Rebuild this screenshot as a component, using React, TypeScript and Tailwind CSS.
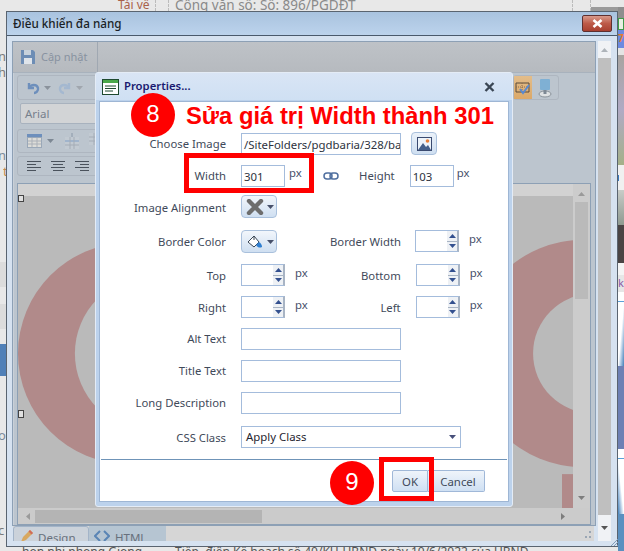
import React from "react";

const Arrow = ({ up = false, c = "#33508f" }: { up?: boolean; c?: string }) => (
  <svg width="7" height="4" viewBox="0 0 7 4"><path d={up ? "M3.5 0L7 4H0Z" : "M0 0H7L3.5 4Z"} fill={c} /></svg>
);

const Spin = () => (
  <div className="w-[44px] h-[22px] border border-[#a4bcdc] border-r-[2px] border-r-[#a8b4c4] bg-white flex justify-end">
    <div className="w-[10px] h-full flex flex-col gap-[1px] bg-[#a8b4c4]">
      <div className="flex-1 bg-[#eef1f5] flex items-center justify-center"><Arrow up /></div>
      <div className="flex-1 bg-[#eef1f5] flex items-center justify-center"><Arrow /></div>
    </div>
  </div>
);

const Label = ({ children, w = "w-[126px]", lh = "leading-[21px]" }: { children: React.ReactNode; w?: string; lh?: string }) => (
  <div className={`${w} ${lh} text-right text-[#3f4a5a] text-[11.3px] shrink-0 whitespace-nowrap`}>{children}</div>
);

const Px = ({ className = "" }: { className?: string }) => (
  <span className={`text-[11.3px] leading-[18px] text-[#47506a] ${className}`}>px</span>
);

const Input = ({ w, v = "" }: { w: string; v?: string }) => (
  <div className={`${w} h-[22px] border border-[#a4bcdc] bg-white text-[11.4px] leading-[22px] px-[2px] text-[#2d3340] overflow-hidden whitespace-nowrap`}>{v}</div>
);

const DropBtn = ({ children }: { children: React.ReactNode }) => (
  <div className="w-[36px] h-[23px] rounded-[4px] border border-[#a9c0dc] bg-gradient-to-b from-[#f2f6fb] to-[#cfdff1] flex items-center pl-[4px] gap-[3px]">
    <div className="w-[18px] h-[18px] flex items-center justify-center">{children}</div>
    <Arrow c="#47506a" />
  </div>
);

export default function App() {
  return (
    <div className="relative w-[624px] h-[551px] overflow-hidden bg-[#e8e8e8]" style={{ fontFamily: '"Noto Sans", sans-serif' }}>
      {/* page behind */}
      <div className="absolute left-[118px] top-[-3px] text-[12px] leading-[16px] text-[#a8614a]">Tải về</div>
      <div className="absolute left-[175px] top-[-4px] text-[13.5px] leading-[18px] text-[#8a8a8a] whitespace-nowrap">Công văn số: Số: 896/PGDĐT</div>
      <div className="absolute left-[155px] top-0 h-[11px] border-l border-dashed border-[#bbbbbb]" />
      <div className="absolute left-[168px] top-0 h-[11px] border-l border-dashed border-[#bbbbbb]" />
      <div className="absolute left-[572px] top-0 h-[11px] border-l border-dashed border-[#bbbbbb]" />
      <div className="absolute left-[590px] top-0 h-[11px] border-l border-dashed border-[#bbbbbb]" />
      <div className="absolute left-[591px] top-[7px] w-[33px] h-[5px] bg-[#9a9a9a]" />

      {/* right strip of the page */}
      <div className="absolute left-[618px] top-[7px] w-[6px] h-[544px] flex flex-col overflow-hidden">
        <div className="h-[11px] bg-[#8e8e8e] shrink-0" />
        <div className="h-[12px] bg-[#e8f0e4] border border-[#3f9a4a] shrink-0" />
        <div className="h-[18px] bg-[#6d8ae0] shrink-0 text-[10px] leading-[16px] font-bold text-[#e87a2a] overflow-hidden">7</div>
        <div className="h-[7px] bg-[#e4e4e4] shrink-0" />
        <div className="h-[110px] bg-gradient-to-b from-[#a8a4a0] via-[#b0aac4] to-[#a4b088] shrink-0" />
        <div className="h-[25px] bg-[#f0f0f0] shrink-0 flex items-center"><div className="w-[1px] h-[6px] bg-[#3a7ac0]" /></div>
        <div className="h-[35px] bg-gradient-to-b from-[#c8ccc8] to-[#8f9a90] shrink-0" />
        <div className="h-[38px] bg-[#4a4444] shrink-0" />
        <div className="h-[12px] bg-[#f4f4f4] shrink-0" />
        <div className="h-[17px] bg-[#e6e6e6] text-[11px] leading-[15px] text-[#8a5aa8] shrink-0">k</div>
        <div className="h-[10px] bg-white border-b border-[#5aa0d8] shrink-0" />
        <div className="h-[64px] bg-gradient-to-br from-white via-white to-[#3f7fb8] shrink-0" />
        <div className="h-[83px] bg-[#6d80b4] shrink-0" />
        <div className="h-[10px] bg-white border-b border-[#5aa0d8] shrink-0" />
        <div className="h-[55px] bg-gradient-to-tr from-[#3f7fb8] via-white to-white shrink-0" />
        <div className="flex-1 bg-[#5a90c0]" />
      </div>

      {/* left strip of the page */}
      <div className="absolute left-0 top-[262px] w-[6px] h-[25px] bg-[#dcdcdc]" />
      <div className="absolute left-0 top-[304px] w-[6px] h-[25px] bg-[#dcdcdc]" />
      <div className="absolute left-0 top-[344px] w-[6px] h-[32px] bg-[#5080b8]" />
      <div className="absolute left-[-2px] top-[48px] w-[8px] overflow-hidden text-[13px] leading-[17px] text-[#7a7a7a]">n</div>
      <div className="absolute left-[-2px] top-[64px] w-[8px] overflow-hidden text-[13px] leading-[17px] text-[#7a7a7a]">h</div>
      <div className="absolute left-[-2px] top-[147px] w-[8px] overflow-hidden text-[13px] leading-[17px] text-[#7a8a9a]">n</div>
      <div className="absolute left-[3px] top-[163px] w-[3px] overflow-hidden text-[13px] leading-[17px] text-[#c08a50]">t</div>
      <div className="absolute left-[-2px] top-[427px] w-[8px] overflow-hidden text-[13px] leading-[17px] text-[#7a8a9a]">o</div>
      <div className="absolute left-[-2px] top-[522px] w-[8px] overflow-hidden text-[13px] leading-[17px] text-[#7a7a7a]">c</div>

      <div className="absolute left-[22px] top-[545px] text-[12px] leading-[14px] text-[#555] whitespace-nowrap">hon nhi phong Giong</div>
      <div className="absolute left-[175px] top-[545px] text-[12px] leading-[14px] text-[#555] whitespace-nowrap">Tiếp, điện Kế hoạch số 40/KH-UBND ngày 10/6/2022 của UBND...</div>

      {/* outer window */}
      <div className="absolute left-[6px] top-[11px] w-[612px] h-[536px] border border-[#5a6470] bg-[#d6e2f0] flex flex-col overflow-hidden">
        <div className="h-[24px] shrink-0 bg-gradient-to-b from-[#a9c3df] to-[#bcd3ec] border-b border-[#4a5a6c] flex items-center justify-between pl-[6px] pr-[5px]">
          <span className="text-[11.7px] font-medium text-[#1b1f26]">Điều khiển đa năng</span>
          <div className="w-[30px] h-[17px] rounded-[2px] border border-[#5f3030] bg-gradient-to-b from-[#d89a8c] via-[#bd5a48] to-[#a84030] flex items-center justify-center">
            <svg width="11" height="9" viewBox="0 0 11 9"><path d="M1.5 1L9.5 8M9.5 1L1.5 8" stroke="#fff" strokeWidth="2.6" /></svg>
          </div>
        </div>
        <div className="flex flex-1 min-h-0 pl-[5px] pt-[5px]">
          {/* inner panel */}
          <div className="w-[584px] flex flex-col">
            <div className="h-[485px] border border-[#8da0b5] flex flex-col bg-[#bcc5ce] shrink-0">
              <div className="h-[31px] shrink-0 bg-gradient-to-b from-[#bec2c7] to-[#b6babf] flex items-center border-b border-[#a8b2bd]">
                <div className="w-[85px] h-full border-r border-[#a0a8b2] flex items-center pl-[7px] gap-[5px]">
                  <svg width="16" height="16" viewBox="0 0 16 16"><path d="M1 1H13L15 3V15H1Z" fill="#6d8db5" /><rect x="4" y="1" width="7" height="5" fill="#c8d2dc" /><rect x="4" y="9" width="8" height="6" fill="#dfe4ea" /></svg>
                  <span className="text-[11px] text-[#8892a0]">Cập nhật</span>
                </div>
              </div>
              <div className="flex-1 min-h-0 flex flex-col px-[3px] pt-[2px] border-l border-[#c9d0d8]">
                {/* toolbars */}
                <div className="h-[108px] shrink-0 flex justify-between">
                  <div className="w-[90px] flex flex-col">
                    <div className="h-[25px] rounded-[3px] border border-[#aeb6c0] flex items-center pl-[8px] gap-[4px]">
                      <svg width="14" height="14" viewBox="0 0 14 14" fill="none" stroke="#6d8fbc" strokeWidth="2.4"><path d="M3 2V7H8" /><path d="M3 7C5 3 11 3 12 7C12.5 10 10 12 8 12" /></svg>
                      <Arrow c="#8a929c" />
                      <svg width="14" height="14" viewBox="0 0 14 14" fill="none" stroke="#a4b8d0" strokeWidth="2.4" className="ml-[3px]"><path d="M11 2V7H6" /><path d="M11 7C9 3 3 3 2 7C1.5 10 4 12 6 12" /></svg>
                      <Arrow c="#a0a6ae" />
                    </div>
                    <div className="h-[21px] mt-[3px] rounded-[2px] border border-[#a8b2be] bg-[#d2d4d6] text-[11.5px] leading-[19px] pl-[4px] text-[#77808c] ml-[3px]">Arial</div>
                    <div className="h-[24px] mt-[5px] rounded-[3px] border border-[#aeb6c0] flex items-center pl-[9px] gap-[5px]">
                      <svg width="15" height="14" viewBox="0 0 15 14"><rect width="15" height="14" fill="#9aa8b8" /><rect y="0" width="15" height="3" fill="#6d8fbc" /><path d="M1 4H14V13H1Z" fill="#dcdcd8" /><path d="M5 4V13M10 4V13M1 7H14M1 10H14" stroke="#aab0b8" /></svg>
                      <Arrow c="#7d8894" />
                      <svg width="14" height="16" viewBox="0 0 14 16" className="ml-[6px]"><rect y="4" width="14" height="12" fill="#c2cad2" /><path d="M0 8H14" stroke="#a0b4cc" strokeWidth="2" /><path d="M5 4V16M9 4V16M0 12H14" stroke="#a4acb6" /><path d="M7 0V4" stroke="#8a98a8" /></svg>
                      <svg width="14" height="16" viewBox="0 0 14 16" className="ml-[5px]"><rect width="14" height="12" fill="#c2cad2" /><path d="M5 0V12M9 0V12M0 4H14M0 8H14" stroke="#a4acb6" /></svg>
                    </div>
                    <div className="h-[20px] mt-[3px] rounded-[3px] border border-[#aeb6c0] flex items-center pl-[9px] gap-[10px]">
                      {[0, 1, 2].map((i) => (
                        <svg key={i} width="14" height="11" viewBox="0 0 14 11" stroke="#4a525c">
                          <path d={i === 0 ? "M0 .5H14M0 3.5H9M0 6.5H14M0 9.5H9" : i === 1 ? "M0 .5H14M2 3.5H12M0 6.5H14M2 9.5H12" : "M0 .5H14M5 3.5H14M0 6.5H14M5 9.5H14"} />
                        </svg>
                      ))}
                    </div>
                  </div>
                  <div className="w-[46px] h-[25px] rounded-[3px] border border-[#aeb6c0] flex mr-[33px]">
                    <div className="w-[18px] h-full bg-gradient-to-b from-[#e3bd8a] to-[#dba868] flex items-center justify-center">
                      <svg width="16" height="14" viewBox="0 0 16 14" fill="none"><path d="M1 2H14V11H1Z" stroke="#5a4a3a" /><path d="M7 2V11M1 6H14" stroke="#8a6a4a" strokeDasharray="1 1" /><path d="M5 8L8 12L14 4" stroke="#5a8ad0" strokeWidth="2" /></svg>
                    </div>
                    <div className="flex-1 flex items-center justify-center">
                      <svg width="16" height="20" viewBox="0 0 16 20"><rect x="3" y="1" width="10" height="11" rx="1" fill="#7fb0d4" /><ellipse cx="8" cy="16" rx="6" ry="3" fill="#dfe2e4" stroke="#8a929a" /><rect x="6.5" y="12" width="3" height="4" fill="#7d8894" /></svg>
                    </div>
                  </div>
                </div>
                {/* canvas frame */}
                <div className="flex-1 min-h-0 border border-[#8da0b5] border-b-0 mr-[1px] flex flex-col bg-[#cfcfcf]">
                  <div className="flex-1 min-h-0 flex">
                    <div className="flex-1 min-w-0 relative flex flex-col">
                      <div className="h-[12px] shrink-0 bg-[#d2d2d2]" />
                      <svg className="flex-1 w-full min-h-0" viewBox="0 0 556 313" preserveAspectRatio="none">
                        <rect width="556" height="313" fill="#bababa" />
                        <circle cx="111" cy="158" r="111" fill="#b18a8a" />
                        <circle cx="135" cy="158" r="78" fill="#bababa" />
                        <circle cx="566" cy="158" r="114" fill="#b18a8a" />
                        <circle cx="576" cy="158" r="60" fill="#bababa" />
                        <rect x="545" y="279" width="11" height="34" fill="#b18a8a" />
                      </svg>
                      <div className="absolute left-0 top-[11px] w-[6px] h-[7px] border border-[#444] bg-[#e0e0e0]" />
                      <div className="absolute left-0 top-[226px] w-[6px] h-[8px] border border-[#444] bg-[#e0e0e0]" />
                    </div>
                    <div className="w-[17px] shrink-0 bg-[#cccccc] flex flex-col items-center pt-[8px]">
                      <Arrow up c="#9a9a9a" />
                      <div className="w-[13px] h-[97px] bg-[#bababa] mt-[6px]" />
                      <div className="flex-1" />
                      <div className="mb-[8px]"><Arrow c="#7d7d7d" /></div>
                    </div>
                  </div>
                  <div className="h-[17px] shrink-0 bg-[#cbcbcb] flex items-center pl-[8px] pr-[25px] border-b border-[#8da0b5]">
                    <svg width="4" height="7" viewBox="0 0 4 7"><path d="M4 0V7L0 3.5Z" fill="#9a9a9a" /></svg>
                    <div className="w-[227px] h-[13px] bg-[#b4b4b4] ml-[5px]" />
                    <div className="flex-1" />
                    <svg width="4" height="7" viewBox="0 0 4 7"><path d="M0 0V7L4 3.5Z" fill="#7d7d7d" /></svg>
                  </div>
                </div>
              </div>
            </div>
            {/* tabs */}
            <div className="h-[15px] bg-[#d6d6d6] flex overflow-hidden ml-[1px] mr-[2px]">
              <div className="w-[76px] h-[22px] rounded-t-[3px] border border-[#a3b4c8] bg-[#cbd2da] flex items-start pl-[6px] pt-[2px] gap-[4px]">
                <svg width="14" height="14" viewBox="0 0 14 14"><path d="M1 13L3 8L10 1L13 4L6 11Z" fill="#d8a860" /><path d="M10 1L13 4L11.5 5.5L8.5 2.5Z" fill="#d06a5a" /></svg>
                <span className="text-[11.5px] leading-[18px] text-[#68707c]">Design</span>
              </div>
              <div className="w-[77px] h-[22px] bg-[#b6c5d2] flex items-start pl-[5px] pt-[3px] gap-[5px]">
                <svg width="16" height="14" viewBox="0 0 16 14" fill="none" stroke="#5a85b5" strokeWidth="2"><path d="M6 2L1 7L6 12M10 2L15 7L10 12" /></svg>
                <span className="text-[11.5px] leading-[18px] text-[#68707c]">HTML</span>
              </div>
            </div>
          </div>
          {/* right scrollbar */}
          <div className="w-[13px] ml-[2px] flex flex-col items-center mt-[-5px] pt-[5px]">
            <div className="h-[17px] w-full bg-[#f0f2f5] flex items-center justify-center"><Arrow up c="#aeb4ba" /></div>
            <div className="h-[457px] w-full bg-[#bfbfbf]" />
            <div className="h-[26px] w-full bg-[#f0f2f5] flex items-center justify-center"><Arrow c="#555" /></div>
          </div>
        </div>
      </div>

      {/* resize grips */}
      <svg className="absolute left-[585px] top-[531px]" width="7" height="8" viewBox="0 0 7 8" fill="#9aa6b4"><rect x="4" y="0" width="2" height="2" /><rect x="0" y="5" width="2" height="2" /><rect x="4" y="5" width="2" height="2" /></svg>
      <svg className="absolute left-[611px] top-[537px]" width="7" height="9" viewBox="0 0 7 9" stroke="#7f9cba" fill="none"><path d="M0 9L7 2M3 9L7 5M6 9L7 8" /></svg>

      {/* Properties dialog */}
      <div className="absolute left-[95px] top-[72px] w-[418px] h-[435px] rounded-[3px] border border-[#e4ecf6] bg-[#bcd2ec] flex flex-col">
        <div className="h-[27px] shrink-0 bg-gradient-to-b from-[#d9e5f5] to-[#cfe0f3] flex items-center pl-[6px] pr-[17px] gap-[5px]">
          <svg width="17" height="16" viewBox="0 0 17 16"><rect x=".5" y=".5" width="16" height="15" fill="#fff" stroke="#1e4a30" /><rect x="1" y="1" width="15" height="3" fill="#4aa84a" /><path d="M3 7H14M3 9.5H14M3 12H11" stroke="#1e4a30" /></svg>
          <span className="text-[11.3px] font-semibold text-[#1a1a70] flex-1">Properties...</span>
          <svg width="11" height="10" viewBox="0 0 11 10"><path d="M1.5 1L9.5 9M9.5 1L1.5 9" stroke="#3a4654" strokeWidth="2.4" /></svg>
        </div>
        <div className="flex-1 mx-[3px] mb-[4px] mt-[1px] border border-[#9eb6d4] bg-white pt-[31px] flex flex-col">
          <div className="h-[32px] flex items-start gap-[15px]">
            <Label lh="leading-[22px]">Choose Image</Label>
            <Input w="w-[160px]" v="/SiteFolders/pgdbaria/328/ba" />
            <div className="w-[26px] h-[23px] ml-[-5px] mt-[-1px] rounded-[4px] border border-[#a9c0dc] bg-gradient-to-b from-[#eaf1f9] to-[#cfdff1] flex items-center justify-center">
              <svg width="15" height="14" viewBox="0 0 15 14"><rect x=".5" y=".5" width="14" height="13" fill="#eef4fa" stroke="#3a4a70" /><path d="M1 13L6 6L9 10L11 8L14 13Z" fill="#45608a" /><circle cx="10.5" cy="4" r="1.8" fill="#e8803a" /></svg>
            </div>
          </div>
          <div className="h-[30px] flex items-start gap-[15px]">
            <Label>Width</Label>
            <Input w="w-[44px]" v="301" />
            <Px className="ml-[-11px] mt-[-1px]" />
            <svg width="16" height="8" viewBox="0 0 16 8" fill="none" stroke="#4f6f9f" strokeWidth="1.5" className="ml-[6px] mt-[7px]"><rect x="1" y="1" width="8" height="6" rx="3" /><rect x="7" y="1" width="8" height="6" rx="3" /></svg>
            <div className="ml-[5px]"><Label w="w-[36px]">Height</Label></div>
            <Input w="w-[44px]" v="103" />
            <Px className="ml-[-12px] mt-[-1px]" />
          </div>
          <div className="h-[35px] flex items-start gap-[15px]">
            <Label lh="leading-[26px]">Image Alignment</Label>
            <DropBtn>
              <svg width="18" height="16" viewBox="0 0 18 16"><path d="M3 2L15 14M15 2L3 14" stroke="#6d6d6d" strokeWidth="4.4" strokeLinecap="round" /></svg>
            </DropBtn>
          </div>
          <div className="h-[34px] flex items-start gap-[15px]">
            <Label lh="leading-[23px]">Border Color</Label>
            <DropBtn>
              <svg width="16" height="15" viewBox="0 0 16 15"><path d="M1 8L7 2L12 8L7 13Z" fill="#fff" stroke="#3a4654" /><path d="M7 6V2" stroke="#3a4654" /><path d="M12 8C14 9 15 11 15 13C13 14 11 14 9 11Z" fill="#2f7fd0" /></svg>
            </DropBtn>
            <div className="ml-[38px]"><Label lh="leading-[23px]" w="w-[70px]">Border Width</Label></div>
            <Spin />
            <Px className="ml-[-5px]" />
          </div>
          <div className="h-[32px] flex items-start gap-[15px]">
            <Label lh="leading-[23px]">Top</Label>
            <Spin />
            <Px className="ml-[-5px]" />
            <div className="ml-[37px]"><Label lh="leading-[23px]" w="w-[41px]">Bottom</Label></div>
            <Spin />
            <Px className="ml-[-5px]" />
          </div>
          <div className="h-[32px] flex items-start gap-[15px]">
            <Label lh="leading-[23px]">Right</Label>
            <Spin />
            <Px className="ml-[-5px]" />
            <div className="ml-[37px]"><Label lh="leading-[23px]" w="w-[41px]">Left</Label></div>
            <Spin />
            <Px className="ml-[-5px]" />
          </div>
          <div className="h-[32px] flex items-start gap-[15px]"><Label>Alt Text</Label><Input w="w-[160px]" /></div>
          <div className="h-[32px] flex items-start gap-[15px]"><Label>Title Text</Label><Input w="w-[160px]" /></div>
          <div className="h-[34px] flex items-start gap-[15px]"><Label>Long Description</Label><Input w="w-[160px]" /></div>
          <div className="h-[33px] flex items-start gap-[15px] shrink-0">
            <Label lh="leading-[23px]">CSS Class</Label>
            <div className="w-[220px] h-[22px] border border-[#a4bcdc] bg-white flex items-center justify-between pl-[4px] pr-[4px] text-[11.4px] text-[#1f2530]">
              <span>Apply Class</span>
              <Arrow c="#47507a" />
            </div>
          </div>
          <div className="border-t border-[#6f94b8] mx-[1px]" />
          <div className="flex justify-end pt-[10px] pr-[23px]">
            <div className="w-[36px] h-[22px] rounded-l-[2px] border border-[#a0b8d8] bg-gradient-to-b from-[#eff4fa] to-[#cfe0f3] text-[11.4px] leading-[21px] text-center text-[#3f4a5a]">OK</div>
            <div className="w-[57px] h-[22px] pl-[4px] rounded-r-[2px] border border-l-0 border-[#a0b8d8] bg-gradient-to-b from-[#eff4fa] to-[#cfe0f3] text-[11.4px] leading-[21px] text-center text-[#3f4a5a]">Cancel</div>
          </div>
        </div>
      </div>

      {/* annotations */}
      <div className="absolute left-[131px] top-[93px] w-[44px] h-[44px] rounded-full bg-[#ff0000] text-white text-[24px] leading-[42px] text-center" style={{ fontFamily: '"Liberation Sans", sans-serif' }}>8</div>
      <div className="absolute left-[186px] top-[102px] text-[#ff0000] text-[23.8px] leading-[28px] font-bold whitespace-nowrap" style={{ fontFamily: '"Liberation Sans", sans-serif' }}>Sửa giá trị Width thành 301</div>
      <div className="absolute left-[184px] top-[153px] w-[130px] h-[40px] border-[5px] border-[#ff0000]" />
      <div className="absolute left-[330px] top-[461px] w-[44px] h-[44px] rounded-full bg-[#ff0000] text-white text-[24px] leading-[42px] text-center" style={{ fontFamily: '"Liberation Sans", sans-serif' }}>9</div>
      <div className="absolute left-[379px] top-[457px] w-[55px] h-[44px] border-[5px] border-[#ff0000]" />
    </div>
  );
}
